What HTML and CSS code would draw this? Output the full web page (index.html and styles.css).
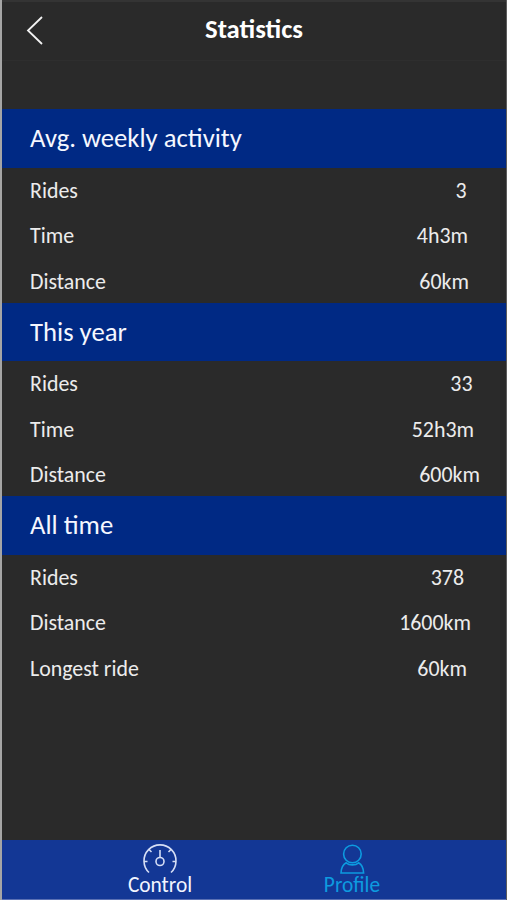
FILE: index.html
```
<!DOCTYPE html>
<html lang="en">
<head>
	<meta charset="utf-8">
	<title>Statistics</title>
	<link rel="stylesheet" href="styles.css">
</head>
<body>
<div class="screen">
	<header class="topbar">
		<svg class="back" width="18" height="30" viewBox="0 0 18 30"><path d="M16 1L2 14.500L16 28"/></svg>
		<h1 class="title">Statistics</h1>
	</header>

	<main class="stats">
		<section class="group">
			<h2 class="heading">Avg. weekly activity</h2>
			<div class="row"><span>Rides</span><span class="value v1">3</span></div>
			<div class="row"><span>Time</span><span class="value v2">4h3m</span></div>
			<div class="row"><span>Distance</span><span class="value v3">60km</span></div>
		</section>
		<section class="group">
			<h2 class="heading">This year</h2>
			<div class="row"><span>Rides</span><span class="value v4">33</span></div>
			<div class="row"><span>Time</span><span class="value v5">52h3m</span></div>
			<div class="row"><span>Distance</span><span class="value v6">600km</span></div>
		</section>
		<section class="group">
			<h2 class="heading">All time</h2>
			<div class="row"><span>Rides</span><span class="value v7">378</span></div>
			<div class="row"><span>Distance</span><span class="value v8">1600km</span></div>
			<div class="row"><span>Longest ride</span><span class="value v9">60km</span></div>
		</section>
	</main>

	<nav class="tabs">
		<a class="tab">
			<svg class="icon" width="36" height="32" viewBox="0 0 36 32">
				<path d="M7 29.500A16 16 0 1 1 29 29.500M2 18.500h3.500M34 18.500h-3.500M7.500 7l2 2M28.500 7l-2 2M18 7v7.500"/>
				<circle cx="18" cy="18.500" r="4"/>
			</svg>
			<span>Control</span>
		</a>
		<a class="tab active">
			<svg class="icon" width="36" height="32" viewBox="0 0 36 32">
				<circle cx="18.400" cy="11" r="8.800"/>
				<path d="M12.200 19.800C9 21.500 7.200 25 7 30H29.600C29.400 25 27.600 21.500 24.600 19.800C21.500 22.600 15.300 22.600 12.200 19.800Z"/>
			</svg>
			<span>Profile</span>
		</a>
	</nav>
</div>
</body>
</html>
```
FILE: styles.css
```
body {
  margin: 0;
  background: #2a2a2a;
  font-family: Carlito, Calibri, Lato, sans-serif;
  color: #ececec;
}

.screen {
  box-sizing: border-box;
  height: 900px;
  display: flex;
  flex-direction: column;
  border-left: 2px solid #a5a5a5;
  border-right: 1px solid #5c5c5c;
  background: #2a2a2a;
  overflow: hidden;
}

.topbar {
  box-sizing: border-box;
  height: 61px;
  display: grid;
  grid-template-columns: 67px 1fr 67px;
  align-items: center;
  border-top: 2px solid #343434;
  border-bottom: 1px solid #2e2e2e;
}

.back {
  margin-left: 24px;
  fill: none;
  stroke: #f2f2f2;
  stroke-width: 1.8;
}

.title {
  margin: 0;
  padding-bottom: 5px;
  text-align: center;
  font-size: 26.7px;
  line-height: 32px;
  color: #fff;
}

.stats {
  flex: 1;
  padding-top: 48px;
}

.group {
  height: 193.6px;
}

.heading {
  box-sizing: border-box;
  margin: 0;
  height: 58.6px;
  padding-left: 28px;
  background: #002984;
  font-size: 26.7px;
  font-weight: normal;
  line-height: 58px;
  color: #f5f7ff;
}

.row {
  display: flex;
  justify-content: space-between;
  height: 45.6px;
  padding-left: 28px;
  font-size: 21.9px;
  line-height: 46.4px;
}

/* right inset of each number */
.v1 { margin-right: 39.5px; }
.v2 { margin-right: 38px; }
.v3 { margin-right: 37px; }
.v4 { margin-right: 33.5px; }
.v5 { margin-right: 32px; }
.v6 { margin-right: 26px; }
.v7 { margin-right: 42px; }
.v8 { margin-right: 35px; }
.v9 { margin-right: 39px; }

.tabs {
  box-sizing: border-box;
  height: 60px;
  display: flex;
  justify-content: center;
  gap: 92px;
  padding-left: 4px;
  background: #133795;
  border-bottom: 1px solid #5a70b4;
}

.tab {
  width: 100px;
  display: flex;
  flex-direction: column;
  align-items: center;
  padding-top: 3px;
  font-size: 21.4px;
  line-height: 20px;
  color: #f2f5ff;
}

.icon {
  fill: none;
  stroke: #d5def5;
  stroke-width: 1.6;
}

.active {
  color: #0d9be0;
}

.active .icon {
  stroke: #0d9be0;
}
```
